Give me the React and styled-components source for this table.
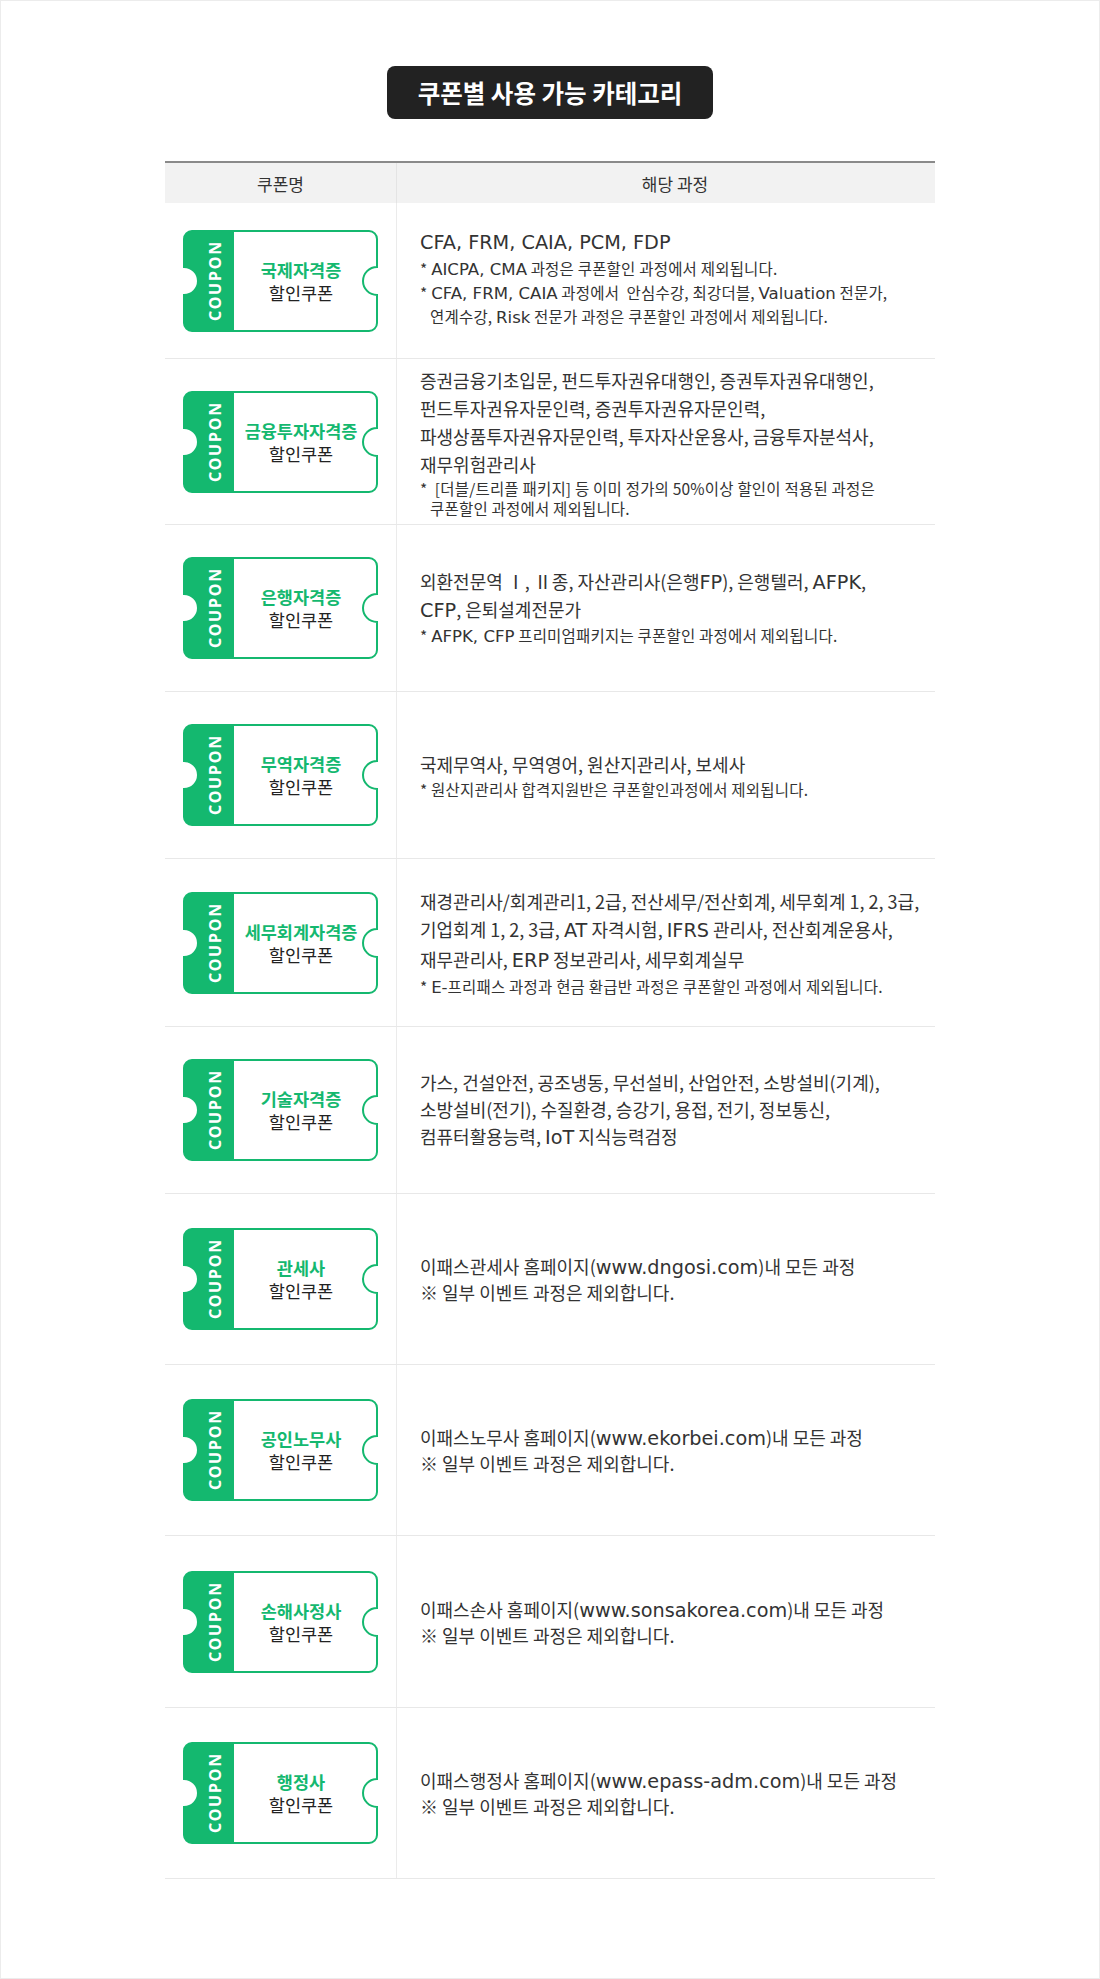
import React from 'react'
import styled, { createGlobalStyle } from 'styled-components'

const GREEN = '#14b86f'

const GlobalStyle = createGlobalStyle`
  html, body {
    margin: 0;
    padding: 0;
    background: #fff;
  }
  body {
    font-family: 'Noto Sans CJK KR', 'Noto Sans', sans-serif;
    color: #333;
  }
`

const Page = styled.div`
  box-sizing: border-box;
  width: 1100px;
  min-height: 1979px;
  border: 1px solid #ececec;
  padding-top: 65px;
  display: flex;
  flex-direction: column;
  align-items: center;
`

const Title = styled.h2`
  margin: 0;
  width: 326px;
  height: 53px;
  display: flex;
  align-items: center;
  justify-content: center;
  background: #222;
  border-radius: 8px;
  color: #fff;
  font-size: 24.5px;
  font-weight: 700;
`

const Table = styled.div`
  margin-top: 42px;
  width: 770px;
  border-top: 2px solid #8a8a8a;
`

const HeadRow = styled.div`
  display: grid;
  grid-template-columns: 232px 1fr;
  height: 40px;
  background: #f2f2f2;
`

const HeadCell = styled.div`
  display: flex;
  align-items: center;
  justify-content: center;
  font-size: 17px;
  color: #333;
  padding-left: ${p => (p.$first ? 0 : 18)}px;
  border-right: ${p => (p.$first ? '1px solid #e4e4e4' : 'none')};
`

const Row = styled.div`
  display: grid;
  grid-template-columns: 232px 1fr;
  height: ${p => p.$h}px;
  box-sizing: border-box;
  border-bottom: 1px solid #e8e8e8;
`

const CouponCell = styled.div`
  display: flex;
  align-items: center;
  justify-content: center;
  border-right: 1px solid #ebebeb;
`

const Coupon = styled.div`
  position: relative;
  width: 195px;
  height: 102px;
  display: flex;
`

const Shape = styled.svg`
  position: absolute;
  inset: 0;
`

const Strip = styled.div`
  position: relative;
  width: 51px;
  box-sizing: border-box;
  padding-left: 13px;
  display: flex;
  align-items: center;
  justify-content: center;
`

const StripText = styled.span`
  writing-mode: vertical-rl;
  transform: rotate(180deg);
  font-family: 'Noto Sans', sans-serif;
  font-weight: 700;
  font-size: 16px;
  letter-spacing: 1.8px;
  color: #fff;
`

const Name = styled.div`
  position: relative;
  flex: 1;
  display: flex;
  flex-direction: column;
  align-items: center;
  justify-content: center;
  padding-right: 10px;
  font-size: 17.5px;
  line-height: 23px;
`

const Kind = styled.strong`
  color: ${GREEN};
  font-weight: 700;
`

const Sub = styled.span`
  color: #222;
`

const DescCell = styled.div`
  display: flex;
  flex-direction: column;
  justify-content: center;
  padding-left: 23px;
  padding-bottom: ${p => p.$shift || 0}px;
`

const Line = styled.p`
  margin: 0;
  font-size: 18px;
  line-height: ${p => p.$lh}px;
  color: #333;
  white-space: nowrap;
`

const Note = styled.p`
  margin: 0;
  font-size: 15.5px;
  line-height: ${p => p.$lh || 23}px;
  color: #333;
  padding-left: 10px;
  text-indent: -10px;
  letter-spacing: 0.2px;
  white-space: nowrap;
`

const Latin = styled.span`
  font-family: 'DejaVu Sans', 'Open Sans', sans-serif;
  font-size: 1.07em;
  letter-spacing: 0;
`

const rows = [
  {
    kind: '국제자격증',
    h: 156,
    shift: 6,
    lines: ['CFA, FRM, CAIA, PCM, FDP'],
    notes: [
      ['* AICPA, CMA 과정은 쿠폰할인 과정에서 제외됩니다.'],
      ['* CFA, FRM, CAIA 과정에서 \u00a0안심수강, 최강더블, Valuation 전문가,', '연계수강, Risk 전문가 과정은 쿠폰할인 과정에서 제외됩니다.'],
    ],
  },
  {
    kind: '금융투자자격증',
    h: 166,
    lines: [
      '증권금융기초입문, 펀드투자권유대행인, 증권투자권유대행인,',
      '펀드투자권유자문인력, 증권투자권유자문인력,',
      '파생상품투자권유자문인력, 투자자산운용사, 금융투자분석사,',
      '재무위험관리사',
    ],
    noteLh: 20,
    notes: [['*  \u00a0[더블/트리플 패키지] 등 이미 정가의 50%이상 할인이 적용된 과정은', '쿠폰할인 과정에서 제외됩니다.']],
  },
  {
    kind: '은행자격증',
    h: 167,
    lh: 27,
    lines: ['외환전문역 Ⅰ, Ⅱ종, 자산관리사(은행FP), 은행텔러, AFPK,', 'CFP, 은퇴설계전문가'],
    notes: [['* AFPK, CFP 프리미엄패키지는 쿠폰할인 과정에서 제외됩니다.']],
  },
  {
    kind: '무역자격증',
    h: 167,
    lines: ['국제무역사, 무역영어, 원산지관리사, 보세사'],
    notes: [['* 원산지관리사 합격지원반은 쿠폰할인과정에서 제외됩니다.']],
  },
  {
    kind: '세무회계자격증',
    h: 168,
    lines: [
      '재경관리사/회계관리1, 2급, 전산세무/전산회계, 세무회계 1, 2, 3급,',
      '기업회계 1, 2, 3급, AT 자격시험, IFRS 관리사, 전산회계운용사,',
      '재무관리사, ERP 정보관리사, 세무회계실무',
    ],
    notes: [['* E-프리패스 과정과 현금 환급반 과정은 쿠폰할인 과정에서 제외됩니다.']],
  },
  {
    kind: '기술자격증',
    h: 167,
    lh: 27,
    lines: [
      '가스, 건설안전, 공조냉동, 무선설비, 산업안전, 소방설비(기계),',
      '소방설비(전기), 수질환경, 승강기, 용접, 전기, 정보통신,',
      '컴퓨터활용능력, IoT 지식능력검정',
    ],
    notes: [],
  },
  {
    kind: '관세사',
    h: 171,
    lh: 24,
    lines: ['이패스관세사 홈페이지(www.dngosi.com)내 모든 과정', '※ 일부 이벤트 과정은 제외합니다.'],
    notes: [],
  },
  {
    kind: '공인노무사',
    h: 171,
    lh: 24,
    lines: ['이패스노무사 홈페이지(www.ekorbei.com)내 모든 과정', '※ 일부 이벤트 과정은 제외합니다.'],
    notes: [],
  },
  {
    kind: '손해사정사',
    h: 172,
    lh: 24,
    lines: ['이패스손사 홈페이지(www.sonsakorea.com)내 모든 과정', '※ 일부 이벤트 과정은 제외합니다.'],
    notes: [],
  },
  {
    kind: '행정사',
    h: 171,
    lh: 24,
    lines: ['이패스행정사 홈페이지(www.epass-adm.com)내 모든 과정', '※ 일부 이벤트 과정은 제외합니다.'],
    notes: [],
  },
]

// latin words (and lists of them) get a wider face, like the original page font
function rich(text) {
  return text
    .split(/([A-Za-z][A-Za-z.\-]*(?:, [A-Za-z][A-Za-z.\-]*)*)/)
    .map((part, i) => (/^[A-Za-z]/.test(part) ? <Latin key={i}>{part}</Latin> : part))
}

const OUTLINE =
  'M9 1H186A8 8 0 0 1 194 9V37A14 14 0 0 0 194 65V93A8 8 0 0 1 186 101H9A8 8 0 0 1 1 93V65A14 14 0 0 0 1 37V9A8 8 0 0 1 9 1Z'

function CouponShape() {
  return (
    <Shape width="195" height="102" viewBox="0 0 195 102">
      <path d={OUTLINE} fill="#fff" />
      <path d="M9 1H51V101H9A8 8 0 0 1 1 93V65A14 14 0 0 0 1 37V9A8 8 0 0 1 9 1Z" fill={GREEN} />
      <path d={OUTLINE} fill="none" stroke={GREEN} strokeWidth="2" />
    </Shape>
  )
}

function CouponCard({ kind }) {
  return (
    <Coupon>
      <CouponShape />
      <Strip>
        <StripText>COUPON</StripText>
      </Strip>
      <Name>
        <Kind>{kind}</Kind>
        <Sub>할인쿠폰</Sub>
      </Name>
    </Coupon>
  )
}

export default function App() {
  return (
    <>
      <GlobalStyle />
      <Page>
        <Title>쿠폰별 사용 가능 카테고리</Title>
        <Table>
          <HeadRow>
            <HeadCell $first>쿠폰명</HeadCell>
            <HeadCell>해당 과정</HeadCell>
          </HeadRow>
          {rows.map(row => (
            <Row key={row.kind} $h={row.h}>
              <CouponCell>
                <CouponCard kind={row.kind} />
              </CouponCell>
              <DescCell $shift={row.shift}>
                {row.lines.map(l => (
                  <Line key={l} $lh={row.lh || 28}>
                    {rich(l)}
                  </Line>
                ))}
                {row.notes.map(n => (
                  <Note key={n[0]} $lh={row.noteLh}>
                    {rich(n[0])}
                    {n[1] && <br />}
                    {n[1] && rich(n[1])}
                  </Note>
                ))}
              </DescCell>
            </Row>
          ))}
        </Table>
      </Page>
    </>
  )
}
